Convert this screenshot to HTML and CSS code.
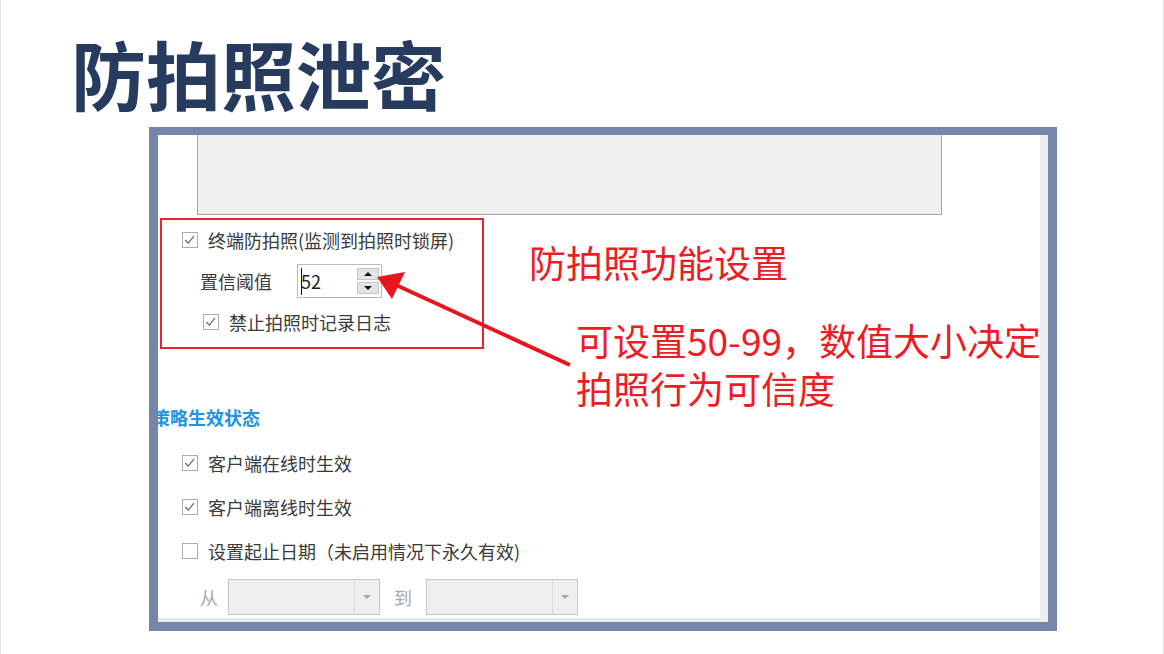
FILE: index.html
```html
<!DOCTYPE html>
<html lang="zh-CN">
<head>
<meta charset="utf-8">
<title>防拍照泄密</title>
<link rel="stylesheet" href="styles.css">
</head>
<body>
<div class="slide">
  <h1 class="title">防拍照泄密</h1>

  <div class="shot">
    <div class="window">
      <div class="pane">
        <div class="preview"></div>

        <div class="focus-box">
          <div class="check-row row-lock">
            <span class="cb"><svg viewBox="0 0 16 16"><polyline points="2.5,8 6,11.5 12.5,3.5"/></svg></span>
            <span class="cb-text">终端防拍照(监测到拍照时锁屏)</span>
          </div>
          <div class="field-row">
            <span class="field-label">置信阈值</span>
            <div class="spin">
              <span class="caret"></span>
              <span class="spin-value">52</span>
              <span class="spin-btns">
                <span class="spin-btn up"></span>
                <span class="spin-btn down"></span>
              </span>
            </div>
          </div>
          <div class="check-row row-log">
            <span class="cb"><svg viewBox="0 0 16 16"><polyline points="2.5,8 6,11.5 12.5,3.5"/></svg></span>
            <span class="cb-text">禁止拍照时记录日志</span>
          </div>
        </div>

        <div class="section-title">策略生效状态</div>

        <div class="options">
          <div class="check-row">
            <span class="cb"><svg viewBox="0 0 16 16"><polyline points="2.5,8 6,11.5 12.5,3.5"/></svg></span>
            <span class="cb-text">客户端在线时生效</span>
          </div>
          <div class="check-row">
            <span class="cb"><svg viewBox="0 0 16 16"><polyline points="2.5,8 6,11.5 12.5,3.5"/></svg></span>
            <span class="cb-text">客户端离线时生效</span>
          </div>
          <div class="check-row">
            <span class="cb"></span>
            <span class="cb-text">设置起止日期（未启用情况下永久有效)</span>
          </div>
        </div>

        <div class="date-row">
          <span class="date-label">从</span>
          <div class="combo"><span class="combo-btn"></span></div>
          <span class="date-label to">到</span>
          <div class="combo"><span class="combo-btn"></span></div>
        </div>
      </div>
      <div class="scrollbar"></div>
    </div>

    <div class="callouts">
      <div class="note note-title">防拍照功能设置</div>
      <div class="note note-range">
        <div class="note-line">可设置50-99，数值大小决定</div>
        <div class="note-line">拍照行为可信度</div>
      </div>
      <svg class="arrow" viewBox="0 0 908 504">
        <line x1="247" y1="158" x2="421" y2="238"/>
        <polygon points="228,150 256,145 243,172"/>
      </svg>
    </div>
  </div>
</div>
</body>
</html>
```

FILE: styles.css
```css
* {
  box-sizing: border-box;
}

html,
body {
  margin: 0;
  padding: 0;
  background: #ffffff;
}

body {
  width: 1164px;
  height: 654px;
  overflow: hidden;
  font-family: "Noto Sans CJK SC", "Noto Sans", sans-serif;
}

.slide {
  width: 1164px;
  height: 654px;
  border-left: 1px solid #e2e2e2;
  border-right: 1px solid #e2e2e2;
  padding-top: 35px;
  display: flex;
  flex-direction: column;
}

.title {
  margin: 0 0 0 70px;
  font-size: 75px;
  line-height: 75px;
  font-weight: 700;
  color: #263b5e;
  letter-spacing: 0;
}

/* framed screenshot of the policy dialog */
.shot {
  position: relative;
  margin: 17px 0 0 148px;
  width: 908px;
  height: 504px;
  border-style: solid;
  border-color: #7586a8;
  border-width: 8px 9px 9px 9px;
  background: #ffffff;
}

.window {
  display: flex;
  height: 100%;
  overflow: hidden;
}

.pane {
  flex: 1;
  display: flex;
  flex-direction: column;
  overflow: hidden;
  border-bottom: 4px solid #ebebeb;
  color: #3a3a3a;
  font-size: 18px;
}

.scrollbar {
  width: 8px;
  background: #eeeeee;
}

.preview {
  margin-left: 39px;
  width: 745px;
  height: 80px;
  flex: none;
  background: #f0f0f0;
  border: 1px solid #a3a3a3;
  border-top: none;
}

.focus-box {
  margin: 3px 0 0 2px;
  width: 324px;
  height: 131px;
  flex: none;
  border: 2px solid #e6262e;
  padding-top: 4px;
  display: flex;
  flex-direction: column;
  gap: 9px;
}

.check-row {
  display: flex;
  align-items: center;
  height: 32px;
  line-height: 24px;
  white-space: nowrap;
}

.row-lock {
  padding-left: 20px;
}

.row-log {
  padding-left: 41px;
}

.cb {
  width: 16px;
  height: 16px;
  flex: none;
  border: 1px solid #acacac;
  background: #ffffff;
  margin-right: 10px;
  display: flex;
}

.cb svg {
  width: 14px;
  height: 14px;
}

.cb polyline {
  fill: none;
  stroke: #6e6e6e;
  stroke-width: 1.5;
}

.field-row {
  display: flex;
  align-items: center;
  height: 32px;
  padding-left: 38px;
}

.field-label {
  width: 97px;
  line-height: 24px;
}

.spin {
  position: relative;
  width: 85px;
  height: 34px;
  border: 1px solid #bcbcbc;
  display: flex;
  align-items: center;
  padding-left: 3px;
}

.caret {
  width: 1px;
  height: 27px;
  background: #111111;
  margin-right: -1px;
}

.spin-value {
  color: #1c1c1c;
  line-height: 24px;
}

.spin-btns {
  margin-left: auto;
  margin-right: 2px;
  display: flex;
  flex-direction: column;
  gap: 2px;
}

.spin-btn {
  width: 22px;
  height: 12px;
  background: #e4e4e4;
  border: 1px solid #c4c4c4;
  display: flex;
  align-items: center;
  justify-content: center;
}

.spin-btn::before {
  content: "";
  border-left: 4px solid transparent;
  border-right: 4px solid transparent;
}

.spin-btn.up::before {
  border-bottom: 4px solid #111111;
}

.spin-btn.down::before {
  border-top: 4px solid #111111;
}

.section-title {
  margin: 56px 0 0 -6px;
  line-height: 24px;
  font-size: 18px;
  font-weight: 700;
  color: #2293de;
  white-space: nowrap;
}

.options {
  margin-top: 18px;
  padding-left: 24px;
  display: flex;
  flex-direction: column;
  gap: 12px;
}

.date-row {
  margin-top: 12px;
  padding-left: 42px;
  display: flex;
  align-items: center;
  height: 36px;
}

.date-label {
  color: #a9a9a9;
  width: 28px;
  line-height: 24px;
}

.date-label.to {
  margin-left: 14px;
  width: 32px;
}

.combo {
  width: 152px;
  height: 36px;
  border: 1px solid #c6c6c6;
  background: #efefef;
  display: flex;
  justify-content: flex-end;
}

.combo-btn {
  width: 25px;
  border-left: 1px solid #dcdcdc;
  display: flex;
  align-items: center;
  justify-content: center;
}

.combo-btn::before {
  content: "";
  border-left: 4px solid transparent;
  border-right: 4px solid transparent;
  border-top: 4px solid #a8a8a8;
}

/* red callout annotations drawn over the dialog */
.callouts {
  position: absolute;
  inset: -8px -9px -9px -9px;
  pointer-events: none;
}

.note {
  position: absolute;
  color: #ee1c25;
  font-size: 37px;
  line-height: 37px;
  white-space: nowrap;
}

.note-title {
  left: 380px;
  top: 117px;
}

.note-range {
  left: 427px;
  top: 195px;
  display: flex;
  flex-direction: column;
  gap: 11px;
}

.arrow {
  position: absolute;
  left: 0;
  top: 0;
  width: 908px;
  height: 504px;
}

.arrow line {
  stroke: #e8151f;
  stroke-width: 4;
}

.arrow polygon {
  fill: #e8151f;
}
```
